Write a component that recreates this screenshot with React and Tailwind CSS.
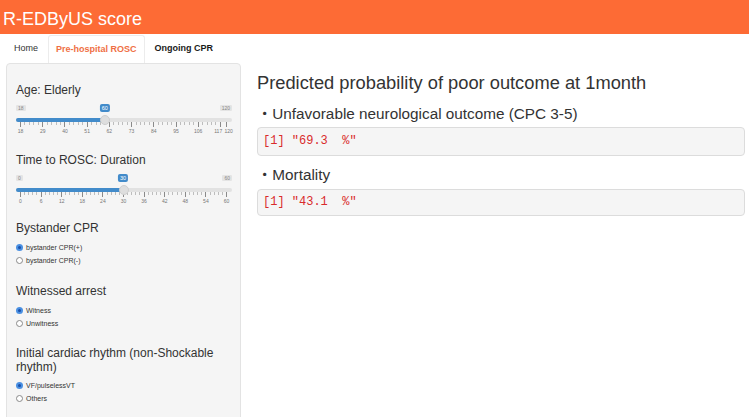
import React from "react";

function Slider({ min, max, value, majors }) {
  const P = 4;
  const W = 206;
  const pos = (v) => P + ((v - min) / (max - min)) * W;
  const step = majors[1] - majors[0];
  const minors = [];
  for (let i = 0; i < majors.length - 1; i++) {
    const a = majors[i];
    const b = majors[i + 1];
    if (b - a < step) continue;
    for (let k = 1; k < 5; k++) minors.push(a + ((b - a) * k) / 5);
  }
  const last = majors[majors.length - 1];
  const tight = max !== last && max - last < step;
  const labels = max === last ? majors : majors.concat([max]);
  return (
    <div className="relative h-[31px] w-[216px]">
      <span className="absolute left-0 top-[2px] h-[6px] px-[2px] rounded-[1px] bg-[#e4e4e4] text-[5px] leading-[6px] text-[#888]">
        {min}
      </span>
      <span className="absolute right-0 top-[2px] h-[6px] px-[2px] rounded-[1px] bg-[#e4e4e4] text-[5px] leading-[6px] text-[#888]">
        {max}
      </span>
      <span
        className="absolute top-[1px] h-[8px] px-[2px] -translate-x-1/2 rounded-[2px] bg-[#428bca] text-white text-[5.5px] leading-[8px]"
        style={{ left: pos(value) }}
      >
        {value}
      </span>
      <div className="absolute left-0 right-0 top-[15px] h-[4px] rounded-full bg-[#e2e2e2]" />
      <div
        className="absolute left-0 top-[15px] h-[4px] rounded-full bg-[#428bca]"
        style={{ width: pos(value) }}
      />
      {minors.map((v) => (
        <span
          key={"m" + v}
          className="absolute top-[19px] h-[3px] w-px bg-[#bdbdbd]"
          style={{ left: pos(v) }}
        />
      ))}
      {labels.map((v) => (
        <span
          key={"M" + v}
          className="absolute top-[19px] h-[5px] w-px bg-[#8a8a8a]"
          style={{ left: pos(v) }}
        />
      ))}
      {labels.map((v) => {
        let cls = "absolute top-[24.5px] -translate-x-1/2 text-[5px] leading-[6px] text-[#777]";
        if (tight && v === last) cls = "absolute top-[24.5px] -translate-x-[78%] text-[5px] leading-[6px] text-[#777]";
        if (tight && v === max) cls = "absolute top-[24.5px] -translate-x-[25%] text-[5px] leading-[6px] text-[#777]";
        return (
          <span key={"L" + v} className={cls} style={{ left: pos(v) + 0.5 }}>
            {v}
          </span>
        );
      })}
      <div
        className="absolute top-[12px] h-[10px] w-[10px] -translate-x-1/2 rounded-full border border-[#cfcfcf] bg-[#dedede]"
        style={{ left: pos(value) + 0.5 }}
      />
    </div>
  );
}

function Radio({ checked, label }) {
  return (
    <div className="flex h-[13px] items-center">
      {checked ? (
        <span className="flex h-[7px] w-[7px] items-center justify-center rounded-full bg-[#4a90e2]">
          <span className="h-[3px] w-[3px] rounded-full bg-[#1a4fa8]" />
        </span>
      ) : (
        <span className="h-[7px] w-[7px] rounded-full border border-[#8a8a8a] bg-white" />
      )}
      <span className="ml-[3px] text-[7px] leading-[9px] text-[#333]">{label}</span>
    </div>
  );
}

export default function App() {
  const ageMajors = [18, 29, 40, 51, 62, 73, 84, 95, 106, 117];
  const timeMajors = [0, 6, 12, 18, 24, 30, 36, 42, 48, 54, 60];
  return (
    <div className="min-h-screen w-full bg-white font-['Liberation_Sans',Arial,sans-serif] text-[#333]">
      <div className="flex h-[34px] items-center bg-[#fd6b35] pl-[3px] pt-[4px] text-[18px] leading-[20px] text-white">
        R-EDByUS score
      </div>
      <div className="flex h-[29px] items-end bg-white pl-[6px]">
        <div className="mr-[2px] flex h-[28px] items-center px-[8px] text-[9px] text-[#333]">Home</div>
        <div className="mr-[2px] flex h-[28px] items-center rounded-t-[3px] border border-b-0 border-[#ececec] bg-white px-[7px] text-[9px] font-bold text-[#ef6f45]">
          Pre-hospital ROSC
        </div>
        <div className="flex h-[28px] items-center px-[8px] text-[9px] font-bold text-[#1a1a1a]">Ongoing CPR</div>
      </div>
      <div className="flex items-start">
        <div className="ml-[6px] w-[235px] shrink-0 rounded-[4px] border border-[#e3e3e3] bg-[#f5f5f5] pb-[40px] pl-[9px] pt-[19px]">
          <div className="text-[12px] leading-[14px]">Age: Elderly</div>
          <div className="mb-[19px] mt-[6px]">
            <Slider min={18} max={120} value={60} majors={ageMajors} />
          </div>
          <div className="text-[12px] leading-[14px]">Time to ROSC: Duration</div>
          <div className="mb-[17px] mt-[6px]">
            <Slider min={0} max={60} value={30} majors={timeMajors} />
          </div>
          <div className="text-[12px] leading-[14px]">Bystander CPR</div>
          <div className="mb-[17px] mt-[6px]">
            <Radio checked label="bystander CPR(+)" />
            <Radio label="bystander CPR(-)" />
          </div>
          <div className="text-[12px] leading-[14px]">Witnessed arrest</div>
          <div className="mb-[16px] mt-[6px]">
            <Radio checked label="Witness" />
            <Radio label="Unwitness" />
          </div>
          <div className="pr-[10px] text-[12px] leading-[14px]">Initial cardiac rhythm (non-Shockable rhythm)</div>
          <div className="mt-[5px]">
            <Radio checked label="VF/pulselessVT" />
            <Radio label="Others" />
          </div>
        </div>
        <div className="ml-[16px] mr-[4px] flex-1 pt-[10px]">
          <div className="text-[18.3px] leading-[20px] text-[#333]">Predicted probability of poor outcome at 1month</div>
          <div className="mt-[11px] text-[15.3px] leading-[16px] text-[#333]">
            <span className="font-['Noto_Sans_CJK_JP',sans-serif]">・</span>Unfavorable neurological outcome (CPC 3-5)
          </div>
          <div className="mt-[5px] rounded-[4px] border border-[#dcdcdc] bg-[#f5f5f5] px-[5px] py-[6px] font-['Liberation_Mono',monospace] text-[12px] leading-[15px] text-[#d92b2b] whitespace-pre">
            {'[1] "69.3  %"'}
          </div>
          <div className="mt-[9px] text-[15.3px] leading-[16px] text-[#333]">
            <span className="font-['Noto_Sans_CJK_JP',sans-serif]">・</span>Mortality
          </div>
          <div className="mt-[6px] rounded-[4px] border border-[#dcdcdc] bg-[#f5f5f5] px-[5px] py-[5px] font-['Liberation_Mono',monospace] text-[12px] leading-[15px] text-[#d92b2b] whitespace-pre">
            {'[1] "43.1  %"'}
          </div>
        </div>
      </div>
    </div>
  );
}
